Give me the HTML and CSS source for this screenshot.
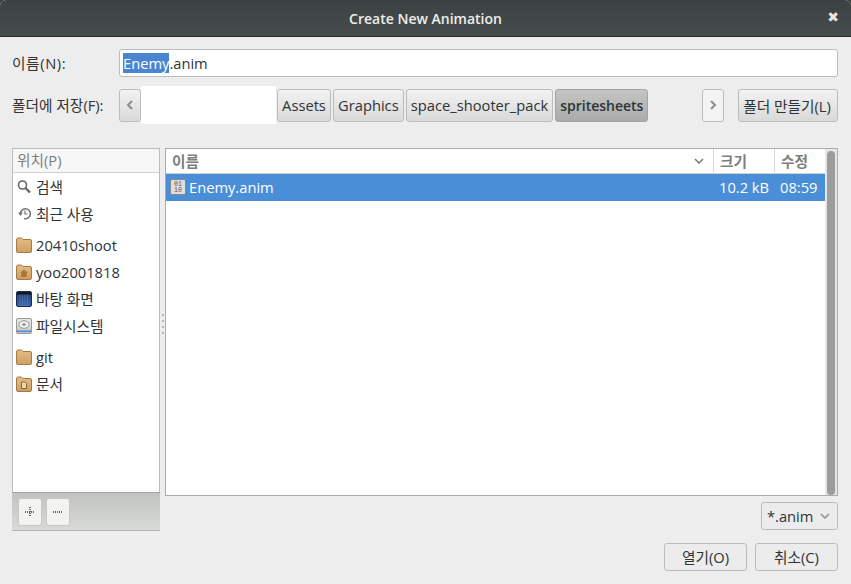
FILE: index.html
```html
<!DOCTYPE html>
<html lang="ko">
<head>
    <meta charset="UTF-8">
    <meta name="viewport" content="width=device-width, initial-scale=1.0">
    <title>Create New Animation</title>
    <link rel="stylesheet" href="styles.css">
</head>
<body>
    <svg width="0" height="0" class="defs">
        <defs>
            <linearGradient id="folderFill" x1="0" y1="0" x2="0" y2="1">
                <stop offset="0" stop-color="#e3bd86"/>
                <stop offset="1" stop-color="#cf9f62"/>
            </linearGradient>
            <linearGradient id="deskFill" x1="0" y1="0" x2="0" y2="1">
                <stop offset="0" stop-color="#1d3a72"/>
                <stop offset="1" stop-color="#3f68ad"/>
            </linearGradient>
            <linearGradient id="diskFill" x1="0" y1="0" x2="0" y2="1">
                <stop offset="0" stop-color="#e8e8e6"/>
                <stop offset="1" stop-color="#c4c4c2"/>
            </linearGradient>
            <g id="folder">
                <path d="M0.500 3 Q0.500 1 2 1 H5.500 L7 2.500 H14 Q15.500 2.500 15.500 4 V14 Q15.500 15.500 14 15.500 H2 Q0.500 15.500 0.500 14 Z" fill="url(#folderFill)" stroke="#a27a45"/>
            </g>
        </defs>
    </svg>
    <div class="dialog">
        <div class="titlebar">
            <span class="title">Create New Animation</span>
            <span class="close">✖</span>
        </div>
        <div class="content">
            <div class="name-row">
                <label class="row-label wide">이름(N):</label>
                <div class="entry"><span class="selected-text">Enemy</span>.anim</div>
            </div>
            <div class="path-row">
                <label class="row-label">폴더에 저장(F):</label>
                <button class="btn arrow-btn">
                    <svg width="8" height="10" viewBox="0 0 8 10"><path d="M6 1 L2 5 L6 9" fill="none" stroke="#8a8f8f" stroke-width="2"/></svg>
                </button>
                <div class="path-blank"></div>
                <button class="btn crumb">Assets</button>
                <button class="btn crumb">Graphics</button>
                <button class="btn crumb">space_shooter_pack</button>
                <button class="btn crumb active">spritesheets</button>
                <div class="path-spacer"></div>
                <button class="btn arrow-btn next">
                    <svg width="8" height="10" viewBox="0 0 8 10"><path d="M2 1 L6 5 L2 9" fill="none" stroke="#8a8f8f" stroke-width="2"/></svg>
                </button>
                <button class="btn new-folder">폴더 만들기(L)</button>
            </div>
            <div class="panes">
                <div class="places">
                    <div class="places-list">
                        <div class="places-head">위치(P)</div>
                        <div class="place">
                            <svg class="icon" viewBox="0 0 16 16"><circle cx="6.500" cy="6" r="4" fill="#fff" stroke="#666" stroke-width="1.600"/><path d="M9.500 9 L14 13.500" stroke="#666" stroke-width="2.400"/></svg>
                            <span>검색</span>
                        </div>
                        <div class="place">
                            <svg class="icon" viewBox="0 0 16 16"><path d="M4.500 8.500 A5 5 0 1 1 8 12.500" fill="none" stroke="#777" stroke-width="1.600"/><path d="M2 6.500 H7 L4.500 10 Z" fill="#777"/><path d="M9 4.500 V8 H11.500" fill="none" stroke="#777" stroke-width="1.200"/></svg>
                            <span>최근 사용</span>
                        </div>
                        <div class="place gap-top">
                            <svg class="icon" viewBox="0 0 16 16"><use href="#folder"/></svg>
                            <span>20410shoot</span>
                        </div>
                        <div class="place">
                            <svg class="icon" viewBox="0 0 16 16"><use href="#folder"/><path d="M8 5.500 L12 9 H10.800 V13 H5.200 V9 H4 Z" fill="#a8793f"/></svg>
                            <span>yoo2001818</span>
                        </div>
                        <div class="place">
                            <svg class="icon" viewBox="0 0 16 16"><rect x="0.500" y="0.500" width="15" height="15" rx="1.500" fill="url(#deskFill)" stroke="#1b2c50"/><rect x="1" y="1" width="14" height="2.500" fill="#15171c"/><path d="M4 3.500 V15 M6.500 3.500 V15 M9 3.500 V15 M11.500 3.500 V15" stroke="#6f90c4" stroke-width="0.800" opacity="0.600"/></svg>
                            <span>바탕 화면</span>
                        </div>
                        <div class="place">
                            <svg class="icon" viewBox="0 0 16 16"><rect x="0.500" y="0.500" width="15" height="15" rx="1.500" fill="url(#diskFill)" stroke="#999"/><ellipse cx="8" cy="6.500" rx="5" ry="3.800" fill="#f2f2f0" stroke="#9a9a9a"/><ellipse cx="8" cy="6.500" rx="1.800" ry="1.200" fill="#8f8f8f"/><rect x="1" y="12.500" width="14" height="1.500" fill="#4a90d9"/></svg>
                            <span>파일시스템</span>
                        </div>
                        <div class="place gap-top">
                            <svg class="icon" viewBox="0 0 16 16"><use href="#folder"/></svg>
                            <span>git</span>
                        </div>
                        <div class="place">
                            <svg class="icon" viewBox="0 0 16 16"><use href="#folder"/><path d="M5.500 6 H9 L10.500 7.500 V12.500 H5.500 Z" fill="#eed9b3" stroke="#8b6230"/></svg>
                            <span>문서</span>
                        </div>
                    </div>
                    <div class="places-tools">
                        <button class="tool-btn">
                            <svg width="14" height="14" viewBox="0 0 14 14"><path d="M2 7 H12 M7 2 V12" stroke="#666" stroke-width="2" stroke-dasharray="1 1"/></svg>
                        </button>
                        <button class="tool-btn">
                            <svg width="14" height="14" viewBox="0 0 14 14"><path d="M2 7 H12" stroke="#666" stroke-width="2" stroke-dasharray="1 1"/></svg>
                        </button>
                    </div>
                </div>
                <div class="handle"><i></i><i></i><i></i><i></i></div>
                <div class="files">
                    <div class="files-main">
                        <div class="files-head">
                            <div class="col col-name">
                                <span>이름</span>
                                <svg width="10" height="6" viewBox="0 0 10 6"><path d="M1 1 L5 5 L9 1" fill="none" stroke="#777" stroke-width="1.500"/></svg>
                            </div>
                            <div class="col col-size">크기</div>
                            <div class="col col-date">수정</div>
                        </div>
                        <div class="file-row">
                            <div class="file-name">
                                <svg class="icon" viewBox="0 0 16 16"><rect x="0.500" y="0.500" width="15" height="15" rx="1.500" fill="#dedede" stroke="#888"/><text x="8" y="7" font-size="6.500" text-anchor="middle" fill="#555" font-family="Liberation Mono">01</text><text x="8" y="13" font-size="6.500" text-anchor="middle" fill="#555" font-family="Liberation Mono">10</text></svg>
                                <span>Enemy.anim</span>
                            </div>
                            <div class="file-size">10.2 kB</div>
                            <div class="file-date">08:59</div>
                        </div>
                    </div>
                    <div class="scrollbar"><div class="thumb"></div></div>
                </div>
            </div>
            <div class="filter-row">
                <div class="btn combo">
                    <span>*.anim</span>
                    <svg width="10" height="6" viewBox="0 0 10 6"><path d="M1 1 L5 5 L9 1" fill="none" stroke="#8a8f8f" stroke-width="1.500"/></svg>
                </div>
            </div>
            <div class="action-row">
                <button class="btn action">열기(O)</button>
                <button class="btn action">취소(C)</button>
            </div>
        </div>
    </div>
</body>
</html>
```

FILE: styles.css
```css
* {
    box-sizing: border-box;
}
html, body {
    margin: 0;
    padding: 0;
}
body {
    width: 851px;
    height: 584px;
    overflow: hidden;
    background: #3b3f3e;
    color: #2e3436;
    font-family: "Open Sans", "Noto Sans CJK KR", sans-serif;
    font-size: 14.7px;
}
.defs {
    position: absolute;
}
.dialog {
    height: 584px;
    background: #ededed;
    border-radius: 6px 6px 0 0;
    overflow: hidden;
    display: flex;
    flex-direction: column;
}
.titlebar {
    height: 37px;
    flex: none;
    background: linear-gradient(#3b4241, #464d4c);
    border-bottom: 1px solid #272b2a;
    color: #eeeeec;
    display: flex;
    align-items: center;
    justify-content: center;
    position: relative;
}
.title {
    font-size: 14px;
    font-weight: 600;
}
.close {
    position: absolute;
    right: 12px;
    top: 9px;
    font-size: 14px;
    color: #e8e8e6;
    font-family: "DejaVu Sans", sans-serif;
}
.content {
    flex: 1;
    padding: 12px 13px 0 12px;
    display: flex;
    flex-direction: column;
}
.row-label {
    width: 107px;
    flex: none;
    color: #333;
    padding-bottom: 2px;
}
.row-label.wide {
    letter-spacing: 0.6px;
}
.name-row {
    display: flex;
    align-items: center;
    height: 28px;
}
.entry {
    flex: 1;
    height: 28px;
    line-height: 26px;
    background: #fff;
    border: 1px solid #b9bdbb;
    border-radius: 3px;
    padding-left: 3px;
}
.selected-text {
    background: #4a86cf;
    color: #fff;
}
.path-row {
    display: flex;
    align-items: center;
    height: 38px;
    margin-top: 9px;
}
.btn {
    height: 33px;
    padding: 0 4px;
    border: 1px solid #bbbdbb;
    border-radius: 3px;
    background: linear-gradient(#f2f2f2, #d9d9d9);
    color: #2e3436;
    font: inherit;
}
.arrow-btn {
    width: 22px;
    padding: 0;
    display: flex;
    align-items: center;
    justify-content: center;
}
.arrow-btn.next {
    background: #f4f4f4;
}
.path-blank {
    width: 135px;
    height: 38px;
    margin-right: 1px;
    background: #fff;
    flex: none;
}
.crumb {
    margin-right: 2px;
    padding: 0 4.1px;
}
.crumb.active {
    background: linear-gradient(#c4c6c4, #a9acaa);
    border-color: #a2a5a3;
    font-weight: 600;
    font-size: 14px;
    width: 93px;
    padding: 0;
}
.path-spacer {
    flex: 1;
}
.new-folder {
    width: 100px;
    margin-left: 14px;
    padding: 0 2px 0 0;
}
.panes {
    display: flex;
    margin-top: 24px;
    height: 383px;
}
.places {
    width: 148px;
    flex: none;
    display: flex;
    flex-direction: column;
}
.places-list {
    height: 345px;
    background: #fff;
    border: 1px solid #b9bdbb;
    border-bottom-color: #a0a4a2;
}
.places-head {
    height: 24px;
    line-height: 23px;
    padding-left: 4px;
    background: #f7f7f7;
    border-bottom: 1px solid #cfd1cf;
    color: #7c7f7e;
}
.place {
    height: 27px;
    display: flex;
    align-items: center;
    gap: 4px;
    padding-left: 3px;
}
.gap-top {
    margin-top: 4px;
}
.icon {
    width: 16px;
    height: 16px;
    flex: none;
}
.places-tools {
    height: 38px;
    background: linear-gradient(#c0c3c0, #d8dad7);
    border-bottom: 1px solid #b4b7b4;
    padding: 5px 6px;
    display: flex;
    gap: 4px;
}
.tool-btn {
    width: 24px;
    height: 28px;
    padding: 0;
    background: #f3f3f1;
    border: 1px solid #c6c8c6;
    border-radius: 3px;
    display: flex;
    align-items: center;
    justify-content: center;
}
.handle {
    width: 5px;
    flex: none;
    display: flex;
    flex-direction: column;
    align-items: center;
    justify-content: center;
    gap: 4px;
    padding-bottom: 31px;
}
.handle i {
    width: 2px;
    height: 2px;
    background: #b5b7b5;
}
.files {
    flex: 1;
    height: 348px;
    display: flex;
    background: #fff;
    border: 1px solid #a9adab;
}
.files-main {
    flex: 1;
}
.files-head {
    height: 25px;
    display: flex;
    border-bottom: 1px solid #cfd1cf;
    color: #7c7f7e;
    font-weight: 600;
}
.col {
    padding-left: 6px;
    line-height: 24px;
}
.col-name {
    width: 547px;
    display: flex;
    align-items: center;
    justify-content: space-between;
    padding-right: 9px;
}
.col-size {
    width: 61px;
    border-left: 1px solid #d8dad8;
}
.col-date {
    flex: 1;
    border-left: 1px solid #d8dad8;
}
.file-row {
    height: 27px;
    display: flex;
    align-items: center;
    background: #4a8ed8;
    color: #fff;
    padding-bottom: 1px;
}
.file-name {
    width: 548px;
    display: flex;
    align-items: center;
    gap: 3px;
    padding-left: 4px;
}
.file-size {
    width: 61px;
    padding-left: 5px;
}
.file-date {
    padding-left: 5px;
}
.scrollbar {
    width: 12px;
    flex: none;
    background: #e6e6e4;
    padding: 2px 2px 0;
}
.thumb {
    height: 344px;
    background: #9b9d9c;
    border-radius: 4px;
}
.filter-row {
    display: flex;
    justify-content: flex-end;
    margin-top: -29px;
    height: 28px;
}
.combo {
    width: 77px;
    height: 28px;
    background: #ececec;
    display: flex;
    align-items: center;
    justify-content: space-between;
    padding: 0 7px 0 5px;
}
.action-row {
    display: flex;
    justify-content: flex-end;
    gap: 8px;
    margin-top: 13px;
}
.action {
    width: 83px;
    height: 28px;
    padding: 0 0 2px;
    background: #ececec;
}
```
